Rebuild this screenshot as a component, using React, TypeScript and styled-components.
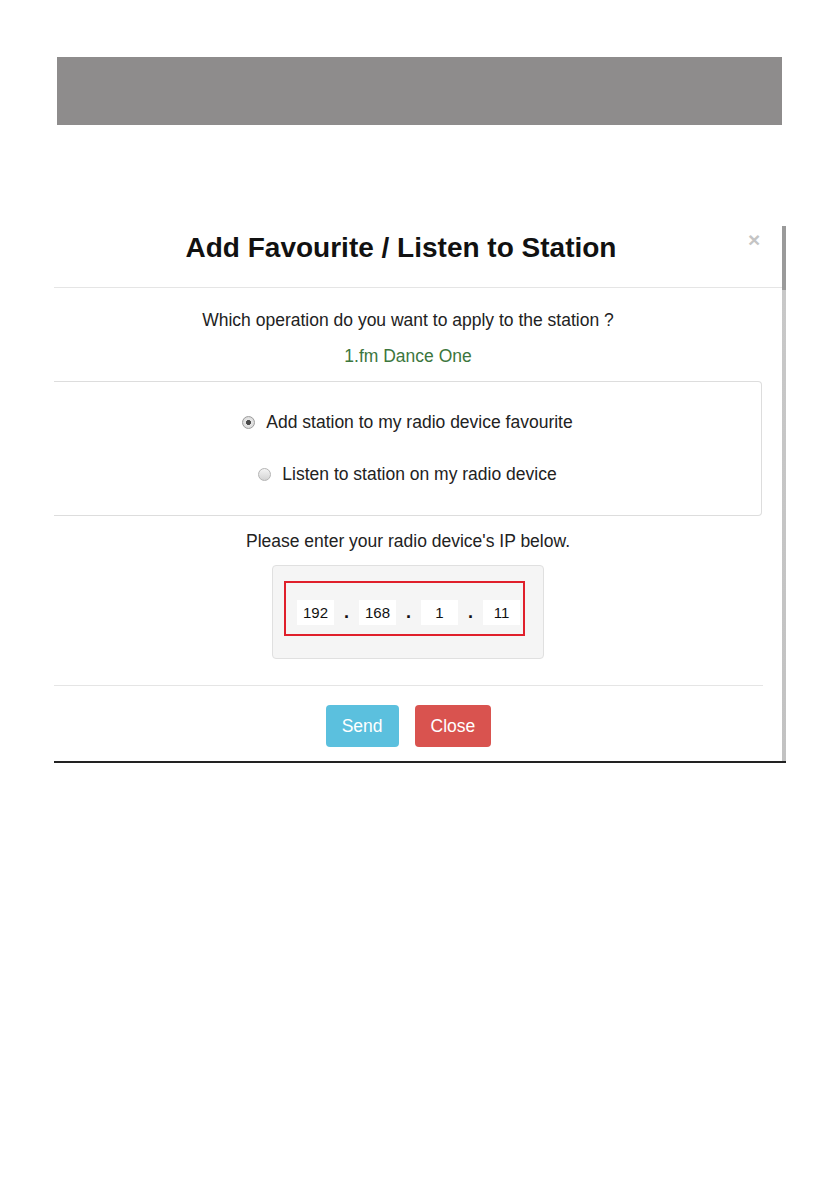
import React from 'react';
import styled, { createGlobalStyle } from 'styled-components';

const GlobalStyle = createGlobalStyle`
  html, body {
    margin: 0;
    padding: 0;
    background: #fff;
  }
  body {
    font-family: "Liberation Sans", Arial, sans-serif;
    color: #222;
  }
`;

const Page = styled.div`
  width: 839px;
  min-height: 1191px;
  display: flex;
  flex-direction: column;
  align-items: flex-start;
`;

const GrayBar = styled.div`
  margin: 57px 0 0 57px;
  width: 725px;
  height: 68px;
  background: #8e8c8c;
`;

const ModalFrame = styled.div`
  margin: 101px 0 0 54px;
  width: 732px;
  display: flex;
  border-bottom: 2px solid #222;
`;

const ModalContent = styled.div`
  flex: 1;
  display: flex;
  flex-direction: column;
`;

const ScrollTrack = styled.div`
  width: 4px;
  background: linear-gradient(
    to bottom,
    #9a9a9a 0,
    #9a9a9a 64px,
    #c8c8c8 64px,
    #c2c2c2 100%
  );
`;

const Header = styled.div`
  display: flex;
  align-items: flex-start;
  padding: 6px 0 23px;
  border-bottom: 1px solid #e5e5e5;
`;

const Title = styled.h4`
  flex: 1;
  margin: 0;
  text-align: center;
  font-size: 28px;
  line-height: 32px;
  font-weight: 700;
  color: #111;
`;

const CloseX = styled.button`
  width: 34px;
  margin-top: -3px;
  padding: 0;
  border: none;
  background: none;
  text-align: left;
  font-family: "Liberation Sans", Arial, sans-serif;
  font-size: 21px;
  line-height: 21px;
  font-weight: 700;
  color: #c4c4c4;
  cursor: pointer;
`;

const Body = styled.div`
  margin-right: 20px;
  padding: 21px 0 26px;
  display: flex;
  flex-direction: column;
  align-items: center;
`;

const Text = styled.p<{ $tone?: 'success' }>`
  margin: 0;
  font-size: 17.5px;
  line-height: 22px;
  color: ${(p) => (p.$tone === 'success' ? '#3c763d' : '#222')};
  & + & {
    margin-top: 14px;
  }
`;

const OptionsBox = styled.div`
  align-self: stretch;
  margin: 14px 0;
  padding: 29px 0 30px;
  border: 1px solid #ddd;
  border-left: none;
  border-radius: 0 4px 4px 0;
  display: flex;
  flex-direction: column;
  align-items: center;
  gap: 30px;
`;

const OptionRow = styled.label`
  display: flex;
  align-items: center;
  gap: 11px;
  font-size: 17.5px;
  line-height: 22px;
  color: #222;
  cursor: pointer;
`;

const Radio = styled.span<{ $checked?: boolean }>`
  width: 13px;
  height: 13px;
  box-sizing: border-box;
  border-radius: 50%;
  border: 1px solid ${(p) => (p.$checked ? '#9c9c9c' : '#b4b4b4')};
  background: ${(p) =>
    p.$checked
      ? 'radial-gradient(circle, #4a4a4a 0, #4a4a4a 2.2px, #e6e6e6 2.8px, #d2d2d2 100%)'
      : 'linear-gradient(to bottom, #f4f4f4, #d3d3d3)'};
`;

const Well = styled.div`
  margin-top: 13px;
  width: 272px;
  height: 94px;
  box-sizing: border-box;
  padding: 15px 0 0 11px;
  background: #f5f5f5;
  border: 1px solid #e0e0e0;
  border-radius: 4px;
`;

const IpFrame = styled.div`
  width: 241px;
  height: 55px;
  box-sizing: border-box;
  border: 2px solid #e0202b;
  padding: 17px 0 0 11px;
  display: flex;
  align-items: flex-start;
`;

const IpInput = styled.input`
  width: 37px;
  height: 25px;
  box-sizing: border-box;
  padding: 0;
  border: none;
  outline: none;
  background: #fff;
  text-align: center;
  font-family: "Liberation Sans", Arial, sans-serif;
  font-size: 15px;
  color: #111;
`;

const IpDot = styled.span`
  width: 25px;
  text-align: center;
  font-size: 18px;
  line-height: 25px;
  font-weight: 700;
  color: #111;
`;

const Footer = styled.div`
  margin-right: 19px;
  padding: 19px 0 14px;
  border-top: 1px solid #e5e5e5;
  display: flex;
  justify-content: center;
  gap: 16px;
`;

const Button = styled.button<{ $variant: 'info' | 'danger' }>`
  height: 42px;
  padding: 0 16px;
  border: none;
  border-radius: 4px;
  background: ${(p) => (p.$variant === 'info' ? '#5bc0de' : '#d9534f')};
  color: #fff;
  font-family: "Liberation Sans", Arial, sans-serif;
  font-size: 17.5px;
  cursor: pointer;
`;

const IP_PARTS = ['192', '168', '1', '11'];

export default function App() {
  return (
    <>
      <GlobalStyle />
      <Page>
        <GrayBar />
        <ModalFrame>
          <ModalContent>
            <Header>
              <Title>Add Favourite / Listen to Station</Title>
              <CloseX aria-label="Close">×</CloseX>
            </Header>
            <Body>
              <Text>Which operation do you want to apply to the station ?</Text>
              <Text $tone="success">1.fm Dance One</Text>
              <OptionsBox>
                <OptionRow>
                  <Radio $checked />
                  Add station to my radio device favourite
                </OptionRow>
                <OptionRow>
                  <Radio />
                  Listen to station on my radio device
                </OptionRow>
              </OptionsBox>
              <Text>Please enter your radio device's IP below.</Text>
              <Well>
                <IpFrame>
                  {IP_PARTS.map((part, i) => (
                    <React.Fragment key={i}>
                      {i > 0 && <IpDot>.</IpDot>}
                      <IpInput defaultValue={part} />
                    </React.Fragment>
                  ))}
                </IpFrame>
              </Well>
            </Body>
            <Footer>
              <Button $variant="info">Send</Button>
              <Button $variant="danger">Close</Button>
            </Footer>
          </ModalContent>
          <ScrollTrack />
        </ModalFrame>
      </Page>
    </>
  );
}
